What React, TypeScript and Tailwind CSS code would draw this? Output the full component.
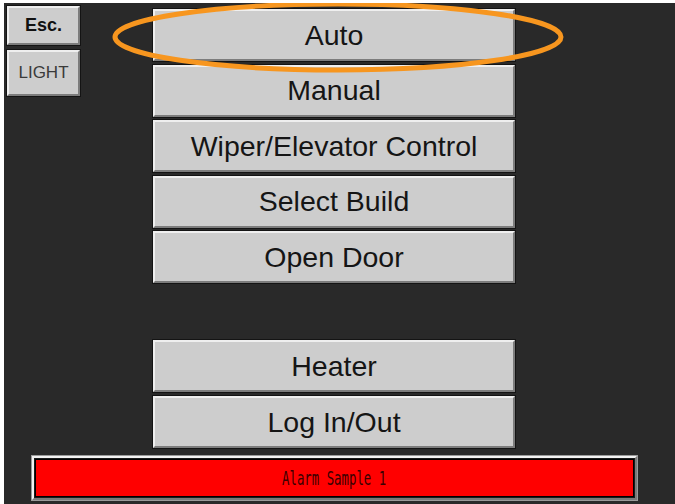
const menuTop = ["Auto", "Manual", "Wiper/Elevator Control", "Select Build", "Open Door"];
const menuBottom = ["Heater", "Log In/Out"];

const Bevel = ({ className, children }: { className: string; children: React.ReactNode }) => (
  <div className={`border border-[#141414] ${className}`}>
    <div className="h-full w-full border-2 border-t-[#efefef] border-l-[#efefef] border-b-[#7c7c7c] border-r-[#7c7c7c] bg-[#cdcdcd] flex items-center justify-center">
      {children}
    </div>
  </div>
);

const MenuButton = ({ label }: { label: string }) => (
  <Bevel className="h-[54px] w-[364px]">
    <span
      className="text-[28.5px] text-[#151515] leading-none"
      style={{ fontFamily: '"Liberation Sans", Arial, sans-serif' }}
    >
      {label}
    </span>
  </Bevel>
);

export default function App() {
  return (
    <div className="w-[675px] h-[504px] bg-white pt-[3px] pl-[4px] overflow-hidden">
      <div className="relative h-[501px] w-[671px] bg-[#292929] flex flex-col">
        <div className="flex">
          <div className="ml-[2px] mt-[2px] flex flex-col gap-[3px]">
            <Bevel className="w-[75px] h-[41px]">
              <span className="text-[18px] font-bold text-[#111]" style={{ fontFamily: '"Liberation Sans", Arial, sans-serif' }}>
                Esc.
              </span>
            </Bevel>
            <Bevel className="w-[75px] h-[48px]">
              <span className="text-[17px] text-[#3a3a3a]" style={{ fontFamily: '"Liberation Sans", Arial, sans-serif' }}>
                LIGHT
              </span>
            </Bevel>
          </div>
          <div className="ml-[71px] mt-[5px] flex flex-col">
            <div className="flex flex-col gap-[1.5px]">
              {menuTop.map((m) => (
                <MenuButton key={m} label={m} />
              ))}
            </div>
            <div className="mt-[55px] flex flex-col gap-[2px]">
              {menuBottom.map((m) => (
                <MenuButton key={m} label={m} />
              ))}
            </div>
          </div>
        </div>
        <div className="ml-[27px] mt-[6px] w-[607px] h-[46px] border border-[#9a9a9a]">
          <div className="h-full w-full border-2 border-t-[#f2f2f2] border-l-[#f2f2f2] border-b-[#7a7a7a] border-r-[#7a7a7a] p-[1px] bg-[#1a1a1a]">
            <div className="h-full w-full bg-[#ff0000] border border-black flex items-center justify-center">
              <span
                className="text-[19px] leading-none text-[#3a0000] scale-x-[0.65]"
                style={{ fontFamily: '"DejaVu Sans Mono", "Liberation Mono", monospace' }}
              >
                Alarm Sample 1
              </span>
            </div>
          </div>
        </div>
        <svg className="absolute left-0 top-0 pointer-events-none" width="671" height="100">
          <ellipse cx="334" cy="34" rx="223" ry="33" fill="none" stroke="#f7961f" strokeWidth="5" />
        </svg>
      </div>
    </div>
  );
}
